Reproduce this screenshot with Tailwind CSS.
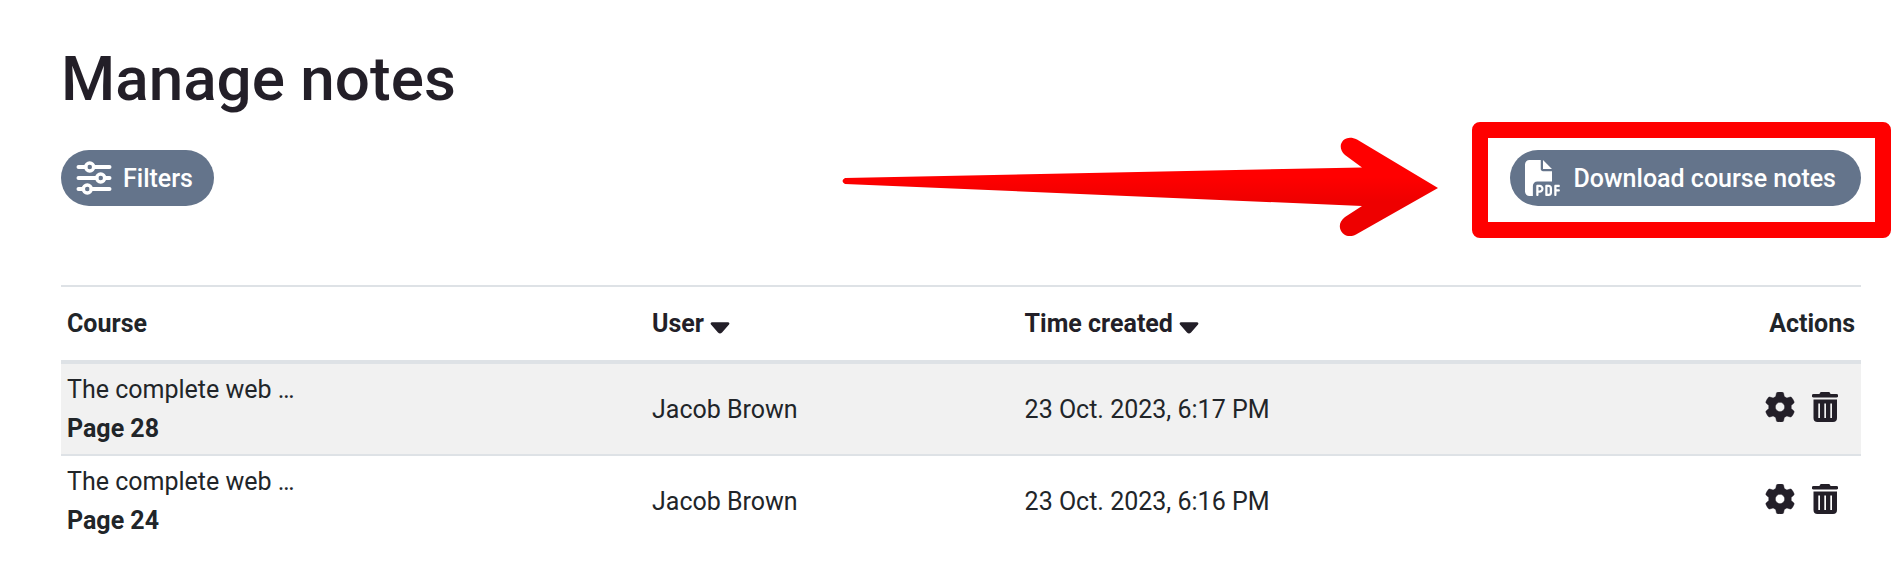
<!DOCTYPE html>
<html lang="en">
<head>
<meta charset="utf-8">
<title>Manage notes</title>
<script src="https://cdn.jsdelivr.net/npm/@tailwindcss/browser@4"></script>
</head>
<body class="bg-white font-['Roboto',sans-serif] text-[25px] leading-[39px] text-[#212529]">
<svg class="hidden" aria-hidden="true">
  <symbol id="gear" viewBox="0 0 512 512"><path d="M495.9 166.6c3.2 8.700 .5 18.400-6.400 24.600l-43.300 39.400c1.100 8.300 1.700 16.800 1.700 25.400s-.6 17.100-1.700 25.400l43.300 39.400c6.900 6.200 9.600 15.900 6.400 24.600c-4.400 11.900-9.700 23.300-15.800 34.300l-4.700 8.100c-6.600 11-14 21.400-22.100 31.200c-5.900 7.200-15.700 9.600-24.500 6.800l-55.700-17.700c-13.400 10.300-28.200 18.900-44 25.400l-12.500 57.100c-2 9.100-9 16.300-18.200 17.800c-13.800 2.300-28 3.500-42.500 3.500s-28.700-1.200-42.500-3.500c-9.200-1.500-16.200-8.700-18.200-17.800l-12.500-57.100c-15.800-6.500-30.600-15.100-44-25.400L83.100 425.900c-8.800 2.800-18.600 .3-24.500-6.800c-8.100-9.800-15.500-20.200-22.100-31.200l-4.700-8.100c-6.100-11-11.400-22.400-15.800-34.300c-3.200-8.700-.5-18.400 6.400-24.600l43.300-39.400C64.600 273.100 64 264.600 64 256s.6-17.100 1.700-25.400L22.400 191.200c-6.900-6.200-9.600-15.900-6.400-24.600c4.400-11.900 9.700-23.300 15.800-34.300l4.700-8.100c6.600-11 14-21.400 22.100-31.200c5.900-7.200 15.700-9.600 24.500-6.800l55.700 17.700c13.400-10.300 28.200-18.900 44-25.400l12.500-57.100c2-9.100 9-16.300 18.200-17.800C227.300 1.200 241.500 0 256 0s28.700 1.200 42.500 3.500c9.200 1.500 16.200 8.700 18.200 17.800l12.500 57.100c15.800 6.500 30.600 15.100 44 25.400l55.700-17.700c8.800-2.800 18.600-.3 24.500 6.800c8.100 9.800 15.500 20.200 22.100 31.200l4.700 8.100c6.100 11 11.400 22.400 15.800 34.300zM256 336a80 80 0 1 0 0-160 80 80 0 1 0 0 160z" stroke="currentColor" stroke-width="8"/></symbol>
  <symbol id="trash" viewBox="0 0 26 30"><path fill-rule="evenodd" d="M1.500 2H7.500C8 .5 8.500 0 9.500 0H16.500C17.500 0 18 .5 18.500 2H24.500A1.750 1.750 0 0 1 24.500 5.500H1.500A1.750 1.750 0 0 1 1.500 2ZM1.500 7.500H25V26A4 4 0 0 1 21 30H5.500A4 4 0 0 1 1.500 26ZM6.300 11.500V26H8V11.500ZM12.300 11.500V26H14V11.500ZM18.300 11.500V26H20V11.500Z"/></symbol>
  <symbol id="caret" viewBox="0 0 20 12"><path d="M2 1H18Q19 1 18.500 2L11.500 10Q10 11.500 8.500 10L1.500 2Q1 1 2 1Z" stroke="currentColor" stroke-width="1.400" stroke-linejoin="round"/></symbol>
</svg>
<main class="px-[39px] pl-[61px]">
  <h1 class="pt-[42px] text-[62px] leading-[74px] font-medium text-[#231f28]">Manage notes</h1>
  <div class="mt-[34px] flex items-center justify-between">
    <button type="button" class="flex h-14 items-center gap-[11px] rounded-full bg-[#64748b] pr-[21px] pl-[15px] font-medium text-white">
      <svg class="h-9 w-9" viewBox="0 0 36 36" fill="none" stroke="currentColor" stroke-width="4" stroke-linecap="round" aria-hidden="true"><path d="M2.500 7H9.500M18 7H33.500M2.500 18H20.500M29 18H33.500M2.500 29H7M15.500 29H33.500"/><g stroke-width="3.400"><circle cx="13.700" cy="7" r="4"/><circle cx="24.700" cy="18" r="4"/><circle cx="11.300" cy="29" r="4"/></g></svg>
      Filters
    </button>
    <div class="relative">
      <button type="button" class="flex h-14 items-center gap-[13px] rounded-full bg-[#64748b] pr-[25px] pl-[15px] font-medium text-white">
        <svg class="h-9 w-9" viewBox="0 0 512 512" fill="currentColor" aria-hidden="true"><path d="M0 64C0 28.700 28.700 0 64 0H224V128c0 17.700 14.300 32 32 32H384V304H176c-35.300 0-64 28.700-64 64V512H64c-35.300 0-64-28.700-64-64V64zm384 64H256V0L384 128zM176 352h32c30.900 0 56 25.100 56 56s-25.100 56-56 56H192v32c0 8.800-7.200 16-16 16s-16-7.200-16-16V448 368c0-8.800 7.200-16 16-16zm32 80c13.300 0 24-10.700 24-24s-10.700-24-24-24H192v48h16zm96-80h32c26.500 0 48 21.500 48 48v64c0 26.500-21.500 48-48 48H304c-8.800 0-16-7.200-16-16V368c0-8.800 7.200-16 16-16zm32 128c8.800 0 16-7.200 16-16V400c0-8.800-7.200-16-16-16H320v96h16zm80-112c0-8.800 7.200-16 16-16h48c8.800 0 16 7.200 16 16s-7.200 16-16 16H448v32h32c8.800 0 16 7.200 16 16s-7.200 16-16 16H448v48c0 8.800-7.200 16-16 16s-16-7.200-16-16V432 368z"/></svg>
        Download course notes
      </button>
      <div class="pointer-events-none absolute -top-7 -right-[30px] -bottom-8 -left-[38px] rounded-lg border-16 border-[#ff0000]"></div>
      <svg class="pointer-events-none absolute -top-[13px] right-full mr-[72px] h-[100px] w-[596px]" viewBox="0 0 596 100" aria-hidden="true">
        <defs><linearGradient id="red" x1="0" y1="0" x2="0" y2="1"><stop offset=".4" stop-color="#ff0000"/><stop offset=".65" stop-color="#ee0000"/></linearGradient></defs>
        <path fill="url(#red)" d="M3 41L520 30.500L503 18C493 9 502-4 515 2.500L596 51L514 97.500C502 104 491 89 503 80L520 69L3 47Q-2 44 3 41Z"/>
      </svg>
    </div>
  </div>
  <table class="mt-[79px] w-full table-fixed border-collapse">
    <colgroup><col class="w-[32.500%]"><col class="w-[20.700%]"><col><col class="w-[10%]"></colgroup>
    <thead>
      <tr class="h-[76px] border-t-2 border-b-4 border-[#dee2e6] text-left">
        <th scope="col" class="px-1.5 font-bold">Course</th>
        <th scope="col" class="px-1.5 font-bold"><button type="button" class="flex items-center gap-1.5 text-[#231f28]">User<svg class="mt-2 h-3 w-5" fill="currentColor" aria-hidden="true"><use href="#caret"/></svg></button></th>
        <th scope="col" class="px-1.5 font-bold"><button type="button" class="flex items-center gap-1.5 text-[#231f28]">Time created<svg class="mt-2 h-3 w-5" fill="currentColor" aria-hidden="true"><use href="#caret"/></svg></button></th>
        <th scope="col" class="px-1.5 text-right font-bold">Actions</th>
      </tr>
    </thead>
    <tbody>
      <tr class="border-b-2 border-[#dee2e6] bg-[#f1f1f1]">
        <td class="p-1.5">The complete web …<br><strong>Page 28</strong></td>
        <td class="p-1.5">Jacob Brown</td>
        <td class="p-1.5">23 Oct. 2023, 6:17 PM</td>
        <td class="p-1.5"><div class="flex justify-end gap-[17px] pr-[17px] pb-1 text-[#231f28]">
          <button type="button" aria-label="Settings"><svg class="h-[30px] w-[30px]" fill="currentColor"><use href="#gear"/></svg></button>
          <button type="button" aria-label="Delete"><svg class="h-[30px] w-[26px]" fill="currentColor"><use href="#trash"/></svg></button></div></td>
      </tr>
      <tr>
        <td class="p-1.5">The complete web …<br><strong>Page 24</strong></td>
        <td class="p-1.5">Jacob Brown</td>
        <td class="p-1.5">23 Oct. 2023, 6:16 PM</td>
        <td class="p-1.5"><div class="flex justify-end gap-[17px] pr-[17px] pb-1 text-[#231f28]">
          <button type="button" aria-label="Settings"><svg class="h-[30px] w-[30px]" fill="currentColor"><use href="#gear"/></svg></button>
          <button type="button" aria-label="Delete"><svg class="h-[30px] w-[26px]" fill="currentColor"><use href="#trash"/></svg></button></div></td>
      </tr>
    </tbody>
  </table>
</main>
</body>
</html>
